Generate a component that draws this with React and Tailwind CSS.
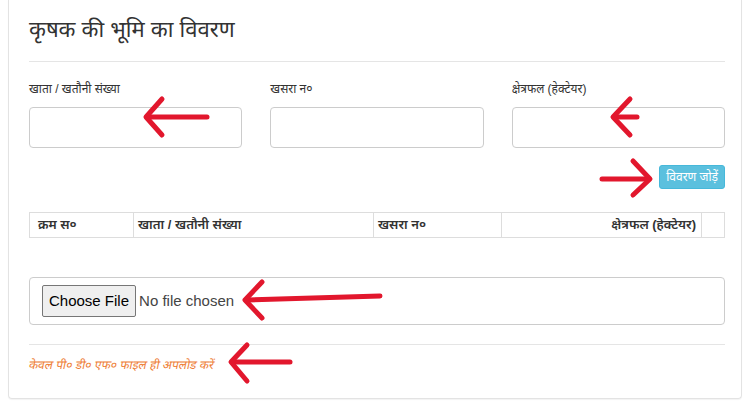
import React from 'react'

const font = { fontFamily: '"Liberation Sans", "Noto Sans", "Noto Sans Devanagari", sans-serif' }

function Arrows() {
  // red annotation arrows drawn over the form
  const arrows = [
    { line: [207, 117, 147, 117], head: '162,99 146,117 162,135' },
    { line: [637, 117, 615, 117], head: '630,99 613,117 630,135' },
    { line: [602, 179, 648, 179], head: '633,161 650,179 633,195' },
    { line: [380, 296, 248, 300], head: '262,282 245,300 262,318' },
    { line: [290, 362, 234, 362], head: '247,345 231,362 247,381' },
  ]
  return (
    <svg className="pointer-events-none absolute inset-0" width="744" height="405">
      {arrows.map((a, i) => (
        <g key={i} stroke="#e2172d" strokeWidth="5" strokeLinecap="round" strokeLinejoin="round" fill="none">
          <line x1={a.line[0]} y1={a.line[1]} x2={a.line[2]} y2={a.line[3]} />
          <polyline points={a.head} />
        </g>
      ))}
    </svg>
  )
}

export default function App() {
  return (
    <div className="relative h-[405px] w-[744px] overflow-hidden bg-white" style={font}>
      <div className="ml-2 mr-[2px] rounded-b border-x border-b border-[#e3e3e3] pl-5 pr-4 shadow-[0_1px_1px_rgba(0,0,0,0.05)]">
        <h3 className="pt-[14px] pb-[15px] text-[22px] leading-[32px] text-[#333]">कृषक की भूमि का विवरण</h3>
        <hr className="border-t border-[#e5e5e5]" />

        <div className="mt-[18px] grid grid-cols-3 gap-7">
          {['खाता / खतौनी संख्या', 'खसरा न०', 'क्षेत्रफल (हेक्टेयर)'].map((l) => (
            <div key={l}>
              <label className="block h-[27px] text-[12px] leading-[18px] text-[#333]">{l}</label>
              <input className="h-[41px] w-full rounded border border-[#ccc] bg-white px-3" />
            </div>
          ))}
        </div>

        <div className="mt-[17px] flex justify-end">
          <button className="h-6 rounded-[3px] border border-[#46b8da] bg-[#5bc0de] px-[6px] text-[12px] text-white">
            विवरण जोड़ें
          </button>
        </div>

        <table className="mt-[23px] w-full border-collapse text-[13px] text-[#333]">
          <thead>
            <tr className="h-[25px]">
              <th className="w-[104px] border border-[#ddd] px-2 text-left font-semibold">क्रम स०</th>
              <th className="w-[240px] border border-[#ddd] px-1 text-left font-semibold">खाता / खतौनी संख्या</th>
              <th className="w-[128px] border border-[#ddd] px-1 text-left font-semibold">खसरा न०</th>
              <th className="border border-[#ddd] px-[5px] text-right font-semibold">क्षेत्रफल (हेक्टेयर)</th>
              <th className="w-[23px] border border-[#ddd]"></th>
            </tr>
          </thead>
        </table>

        <div className="mt-[39px] flex h-[48px] items-center rounded border border-[#ccc] px-3">
          <span className="flex h-8 items-center rounded-[2px] border border-[#767676] bg-[#efefef] px-[6px] text-[15px] text-black">
            Choose File
          </span>
          <span className="ml-[3px] text-[15px] text-[#444]">No file chosen</span>
        </div>

        <hr className="mt-[19px] border-t border-[#e5e5e5]" />
        <p className="pt-[11px] pb-[24px] text-[12px] leading-[18px] text-[#ee7d35]">
          <span className="inline-block -skew-x-12">केवल पी० डी० एफ० फाइल ही अपलोड करें</span>
        </p>
      </div>
      <Arrows />
    </div>
  )
}
